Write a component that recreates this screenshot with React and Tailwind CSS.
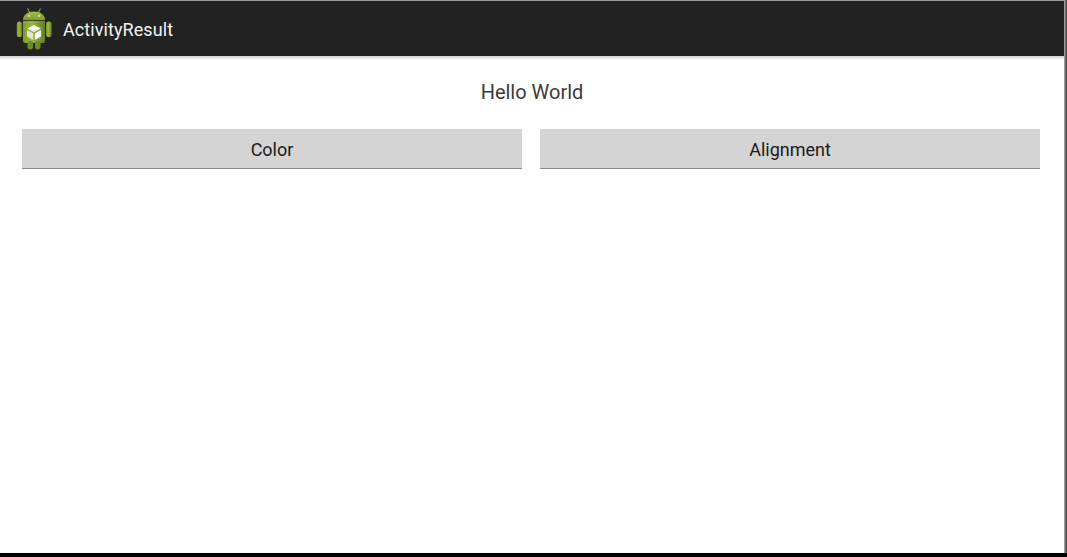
function AndroidIcon() {
  return (
    <svg width="38" height="44" viewBox="0 0 38 44" className="shrink-0">
      <defs>
        <linearGradient id="body" x1="0" y1="0" x2="1" y2="0">
          <stop offset="0" stopColor="#7f9c2c" />
          <stop offset="0.4" stopColor="#9ab83c" />
          <stop offset="1" stopColor="#64802a" />
        </linearGradient>
        <linearGradient id="head" x1="0" y1="0" x2="0" y2="1">
          <stop offset="0" stopColor="#a3bf4c" />
          <stop offset="1" stopColor="#7d9a2c" />
        </linearGradient>
      </defs>
      <path d="M12.5 1.5 L15 6 M25.5 1.5 L23 6" stroke="#8ca544" strokeWidth="1.2" />
      <path d="M8 13 C8 7.5 13 4.5 19 4.5 C25 4.5 30 7.5 30 13 Z" fill="url(#head)" />
      <circle cx="14" cy="9" r="1.1" fill="#dfe8c4" />
      <circle cx="24" cy="9" r="1.1" fill="#dfe8c4" />
      <path d="M8 13.8 H30 V34 Q30 36 28 36 H10 Q8 36 8 34 Z" fill="url(#body)" />
      <rect x="1.8" y="14.5" width="5.4" height="15.5" rx="2.6" fill="url(#body)" />
      <rect x="31" y="14.5" width="5.6" height="15.5" rx="2.6" fill="url(#body)" />
      <rect x="12.5" y="34" width="5.5" height="8.5" rx="2.7" fill="#6f8b26" />
      <rect x="20" y="34" width="5.5" height="8.5" rx="2.7" fill="#6f8b26" />
      <path d="M19 18 L26 21.5 L19 25 L12 21.5 Z" fill="#f4f6ea" />
      <path d="M12 23 L18.2 26.2 V33 L12 29.5 Z" fill="#e0e4d0" />
      <path d="M26 23 L19.8 26.2 V33 L26 29.5 Z" fill="#ffffff" />
    </svg>
  );
}

export default function App() {
  const font = { fontFamily: "Roboto, 'Open Sans', sans-serif" };

  return (
    <div className="w-[1067px] h-[557px] flex flex-col bg-black overflow-hidden" style={font}>
      <div className="flex-1 flex min-h-0">
        <div className="flex-1 flex flex-col bg-white min-w-0">
          <div className="h-px bg-[#9a9a9a]" />
          <div className="h-[55px] flex items-center bg-[#222222] pl-[15px]">
            <AndroidIcon />
            <span className="ml-[10px] pt-[2px] text-[18px] tracking-[0.08px] text-[#f2f2f2]">ActivityResult</span>
          </div>
          <div className="h-[4px] bg-gradient-to-b from-[#cfcfcf] to-white" />
          <div className="flex flex-col px-[22px]">
            <p className="mt-[20px] h-[24px] text-center text-[20px] leading-[24px] text-[#3a3a3a]">Hello World</p>
            <div className="mt-[25px] flex gap-[18px] pr-[2px]">
              <button className="w-[500px] h-[40px] pt-[2px] bg-[#d4d4d4] border-b border-[#8a8a8a] text-[18px] text-[#1a1a1a]">Color</button>
              <button className="w-[500px] h-[40px] pt-[2px] bg-[#d4d4d4] border-b border-[#8a8a8a] text-[18px] text-[#1a1a1a]">Alignment</button>
            </div>
          </div>
        </div>
        <div className="w-[3px] bg-gradient-to-r from-[#b5b5b5] to-[#333333]" />
      </div>
      <div className="h-[4px] bg-black" />
    </div>
  );
}
